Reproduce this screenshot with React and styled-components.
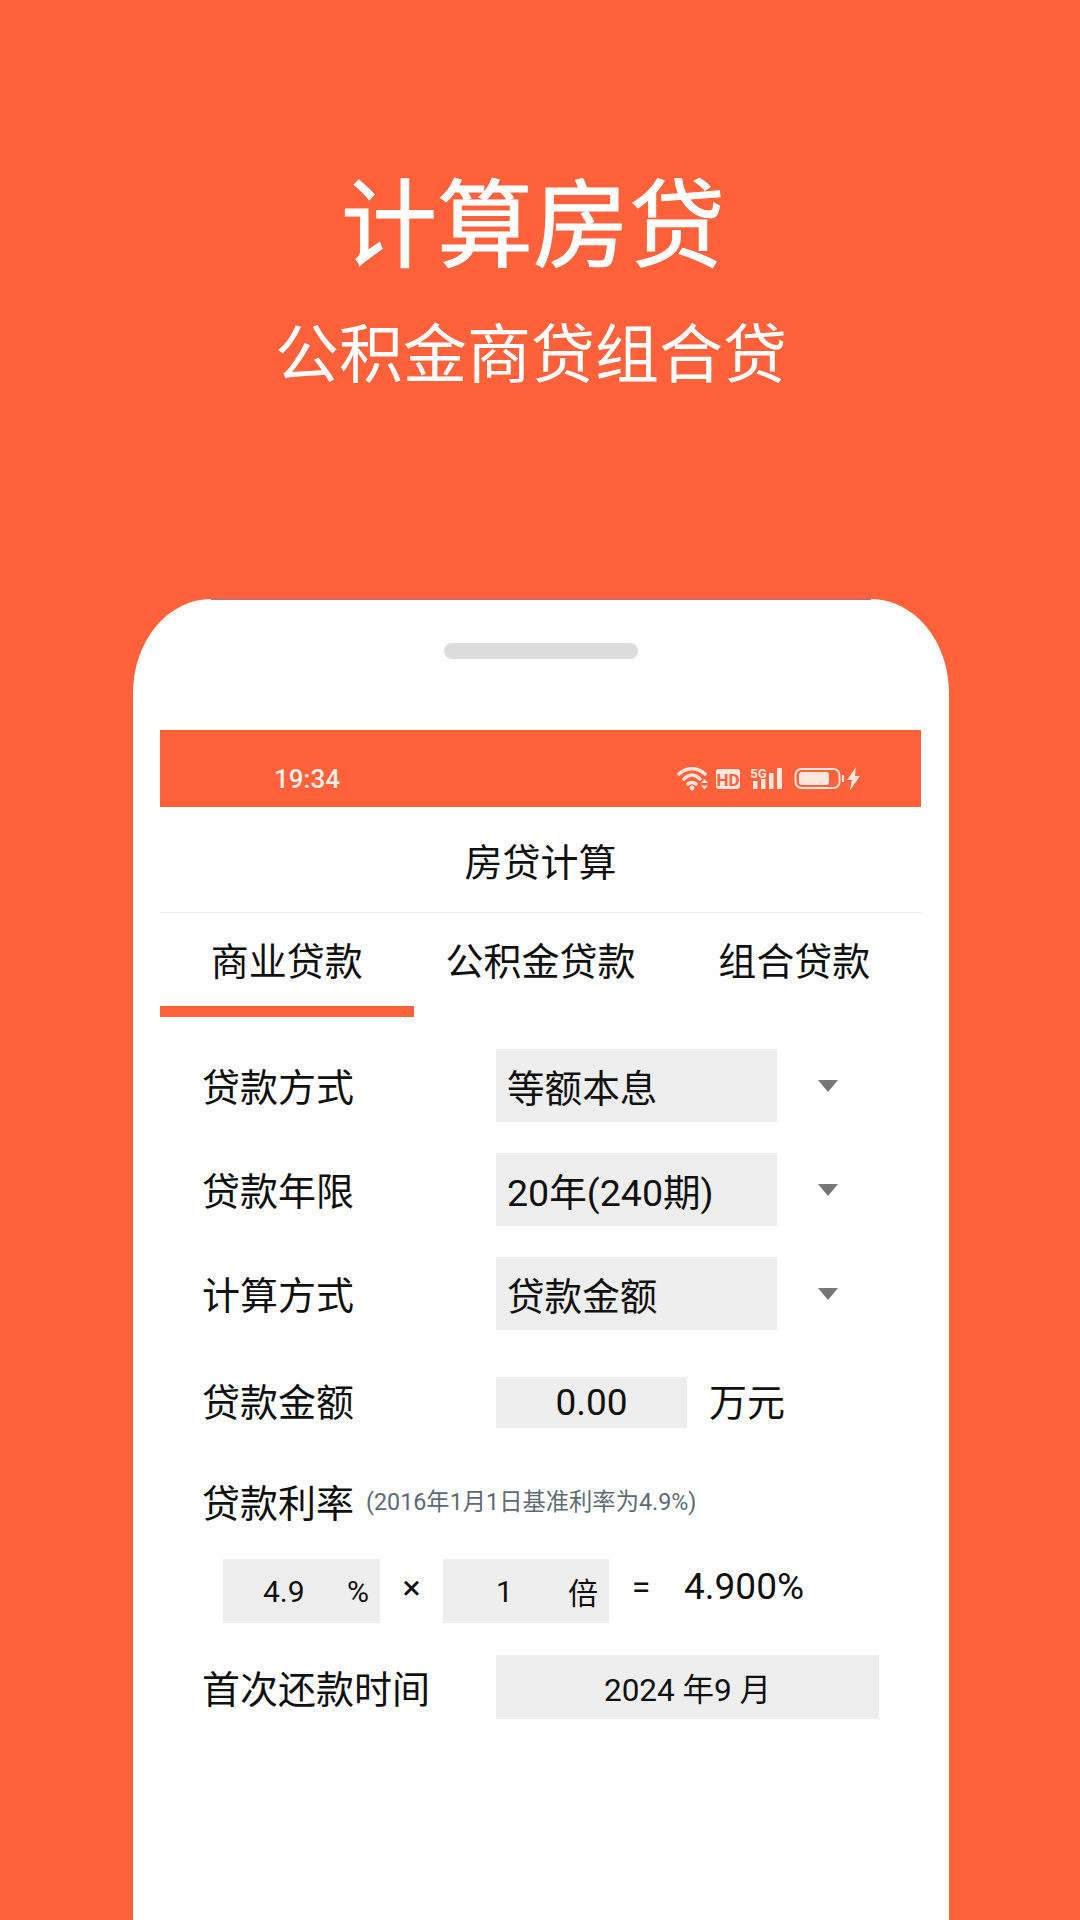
import React from "react";
import styled, { createGlobalStyle } from "styled-components";

const ORANGE = "#ff613a";
const ICON = "#fde6dd";

const GlobalStyle = createGlobalStyle`
  html, body {
    margin: 0;
    padding: 0;
    background: ${ORANGE};
  }
  * {
    box-sizing: border-box;
  }
`;

const Page = styled.div`
  width: 1080px;
  height: 1920px;
  overflow: hidden;
  background: ${ORANGE};
  font-family: Roboto, "Noto Sans CJK SC", sans-serif;
  color: #111;
`;

const Hero = styled.header`
  height: 599px;
  padding: 178px 14px 0 0;
  display: flex;
  flex-direction: column;
  align-items: center;
  color: #fff;
`;

const HeroTitle = styled.h1`
  margin: 0;
  font-size: 96px;
  line-height: 96px;
  font-weight: 400;
  -webkit-text-stroke: 1px #fff;
`;

const HeroSub = styled.h2`
  margin: 50px 4px 0 0;
  font-size: 64px;
  line-height: 64px;
  font-weight: 400;
`;

const Phone = styled.div`
  position: relative;
  width: 816px;
  height: 1321px;
  margin-left: 133px;
  padding: 44px 28px 0 27px;
  background: #fff;
  border-radius: 78px 78px 0 0 / 94px 94px 0 0;

  &::before {
    content: "";
    position: absolute;
    top: 0;
    left: 78px;
    right: 78px;
    height: 1px;
    background: #a9709a;
  }
`;

const Speaker = styled.div`
  width: 194px;
  height: 16px;
  margin: 0 auto 71px;
  border-radius: 8px;
  background: #dcdcdc;
`;

const StatusBar = styled.div`
  height: 77px;
  padding: 34px 0 0 114px;
  display: flex;
  justify-content: space-between;
  background: ${ORANGE};
  color: #fdeee8;
`;

const Time = styled.span`
  font-size: 26px;
  font-weight: 500;
  line-height: 30px;
`;

const StatusSvg = styled.svg`
  width: 184px;
  height: 26px;
  margin: 2px 60px 0 0;
`;

const NavBar = styled.div`
  height: 106px;
  display: flex;
  align-items: center;
  justify-content: center;
  border-bottom: 1px solid #ececec;
  font-size: 38px;
`;

const Tabs = styled.div`
  display: grid;
  grid-template-columns: repeat(3, 1fr);
  height: 104px;
`;

const Tab = styled.div`
  display: flex;
  align-items: center;
  justify-content: center;
  padding-bottom: 2px;
  font-size: 38px;
  border-bottom: 11px solid ${(p) => (p.$active ? ORANGE : "transparent")};
`;

const Form = styled.div`
  padding: 32px 0 0 42px;
  display: flex;
  flex-direction: column;
`;

const Row = styled.div`
  display: flex;
  align-items: center;
  margin-top: ${(p) => p.$gap || 0}px;
`;

const Label = styled.div`
  width: 294px;
  flex: none;
  padding-top: ${(p) => p.$drop || 0}px;
  font-size: 38px;
  line-height: 44px;
`;

const Select = styled.div`
  width: 281px;
  height: 73px;
  padding: 0 11px;
  display: flex;
  align-items: center;
  background: #eeeeee;
  font-size: 37.6px;
`;

const Arrow = styled.div`
  width: 0;
  height: 0;
  margin: 0 0 0 41px;
  border-left: 10.5px solid transparent;
  border-right: 10.5px solid transparent;
  border-top: 12px solid #777;
`;

const AmountBox = styled.div`
  width: 191px;
  height: 51px;
  display: flex;
  align-items: center;
  justify-content: center;
  background: #eeeeee;
  font-size: 37px;
`;

const Unit = styled.span`
  margin-left: 22px;
  font-size: 38px;
  line-height: 44px;
`;

const RateLabel = styled.div`
  font-size: 38px;
  line-height: 44px;
`;

const Note = styled.span`
  margin-left: 12px;
  padding-bottom: 4px;
  font-size: 23.3px;
  line-height: 30px;
  color: #5d6974;
`;

const RateRow = styled(Row)`
  margin-left: 21px;
`;

const RateBox = styled.div`
  width: ${(p) => p.$w}px;
  height: 64px;
  padding: 0 ${(p) => p.$pr}px 0 ${(p) => p.$pl}px;
  display: flex;
  align-items: center;
  justify-content: space-between;
  background: #eeeeee;
  font-size: 30px;
`;

const Operator = styled.span`
  width: ${(p) => p.$w}px;
  text-align: center;
  font-size: 34px;
  font-weight: 400;
  line-height: 40px;
  padding-bottom: 8px;
`;

const RateResult = styled.span`
  margin-left: 11px;
  font-size: 37px;
  line-height: 44px;
  padding-bottom: 8px;
`;

const DateBox = styled.div`
  width: 383px;
  height: 64px;
  display: flex;
  align-items: center;
  justify-content: center;
  background: #eeeeee;
  font-size: 31.5px;
`;

const selects = [
  { label: "贷款方式", value: "等额本息" },
  { label: "贷款年限", value: "20年(240期)" },
  { label: "计算方式", value: "贷款金额" },
];

// status bar glyphs, drawn at screen pixels (x starts at 677, y at 766)
const StatusIcons = () => (
  <StatusSvg viewBox="0 0 184 26">
    <g fill="none" stroke={ICON} strokeWidth="3.4" strokeLinecap="round">
      <path d="M2 8 C9 1 21 1 28 8" />
      <path d="M7 13 C12 8 18 8 23 13" />
      <path d="M11 18 C13 16 17 16 19 18" />
    </g>
    <circle cx="15" cy="22" r="2.4" fill={ICON} />
    <path d="M24 17 l3.5 -4 l3.5 4 z M24 19.5 h7 l-3.5 4 z" fill={ICON} />
    <rect x="39" y="3" width="24" height="20" rx="3" fill={ICON} />
    <text x="51" y="19.5" textAnchor="middle" fontFamily="Roboto, sans-serif" fontWeight="700" fontSize="17" fill={ORANGE}>
      HD
    </text>
    <text x="81.5" y="11.5" textAnchor="middle" fontFamily="Roboto, sans-serif" fontWeight="700" fontSize="13" fill={ICON}>
      5G
    </text>
    <rect x="76" y="15" width="4.5" height="8" fill={ICON} />
    <rect x="84" y="13" width="4.5" height="10" fill={ICON} />
    <rect x="92" y="7" width="4.5" height="16" fill={ICON} />
    <rect x="100" y="2" width="5" height="21" fill={ICON} />
    <rect x="118.5" y="3" width="44" height="19" rx="6" fill="none" stroke={ICON} strokeWidth="2" />
    <rect x="122" y="6" width="30" height="13" rx="3" fill={ICON} />
    <rect x="165" y="9" width="2" height="7" fill={ICON} />
    <path d="M179 1 L170 14 H175 L172.5 25 L183 10 H178 Z" fill={ICON} />
  </StatusSvg>
);

const App = () => {
  return (
    <Page>
      <GlobalStyle />
      <Hero>
        <HeroTitle>计算房贷</HeroTitle>
        <HeroSub>公积金商贷组合贷</HeroSub>
      </Hero>
      <Phone>
        <Speaker />
        <StatusBar>
          <Time>19:34</Time>
          <StatusIcons />
        </StatusBar>
        <NavBar>房贷计算</NavBar>
        <Tabs>
          <Tab $active>商业贷款</Tab>
          <Tab>公积金贷款</Tab>
          <Tab>组合贷款</Tab>
        </Tabs>
        <Form>
          {selects.map((item, index) => (
            <Row key={item.label} $gap={index ? 31 : 0}>
              <Label $drop={4}>{item.label}</Label>
              <Select>{item.value}</Select>
              <Arrow />
            </Row>
          ))}
          <Row $gap={47}>
            <Label $drop={1}>贷款金额</Label>
            <AmountBox>0.00</AmountBox>
            <Unit>万元</Unit>
          </Row>
          <Row $gap={54}>
            <RateLabel>贷款利率</RateLabel>
            <Note>(2016年1月1日基准利率为4.9%)</Note>
          </Row>
          <RateRow $gap={33}>
            <RateBox $w={157} $pl={40} $pr={11}>
              <span>4.9</span>
              <span>%</span>
            </RateBox>
            <Operator $w={63}>×</Operator>
            <RateBox $w={166} $pl={53} $pr={11}>
              <span>1</span>
              <span>倍</span>
            </RateBox>
            <Operator $w={64}>=</Operator>
            <RateResult>4.900%</RateResult>
          </RateRow>
          <Row $gap={32}>
            <Label $drop={6}>首次还款时间</Label>
            <DateBox>2024 年9 月</DateBox>
          </Row>
        </Form>
      </Phone>
    </Page>
  );
};

export default App;
